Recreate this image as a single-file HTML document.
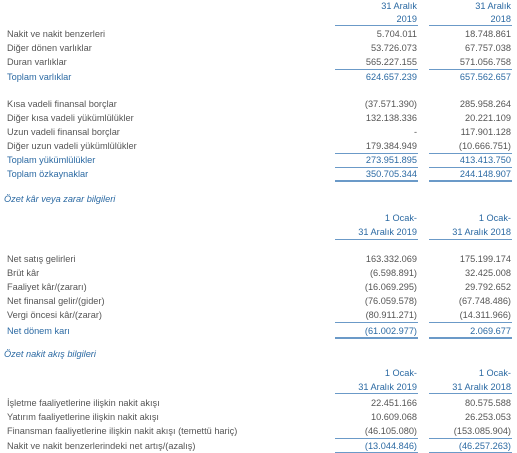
<!DOCTYPE html>
<html><head><meta charset="utf-8"><style>
body{margin:0;width:517px;height:453px;background:#fff;position:relative;overflow:hidden;font-family:"Liberation Sans","DejaVu Sans",sans-serif;font-size:9.2px;color:#555}
.r{position:absolute;left:0;width:517px;height:12px;line-height:12px}
.l{position:absolute;left:7px}
.a{position:absolute;right:100px;text-align:right}
.b{position:absolute;right:6px;text-align:right}
.bl{color:#2c6aa3}
.i{font-style:italic;color:#2c6aa3}
.u{position:absolute;height:1px;background:#6b9ac8}
.d{position:absolute;height:2px;background:#6b9ac8}
</style></head><body>
<div class="r bl" style="top:0px"><span class="a">31 Aralık</span><span class="b">31 Aralık</span></div>
<div class="r bl" style="top:13px"><span class="a">2019</span><span class="b">2018</span></div>
<div class="u" style="top:25px;left:335px;width:83px"></div><div class="u" style="top:25px;left:429px;width:83px"></div>
<div class="r" style="top:28px"><span class="l">Nakit ve nakit benzerleri</span><span class="a">5.704.011</span><span class="b">18.748.861</span></div>
<div class="r" style="top:42px"><span class="l">Diğer dönen varlıklar</span><span class="a">53.726.073</span><span class="b">67.757.038</span></div>
<div class="r" style="top:56px"><span class="l">Duran varlıklar</span><span class="a">565.227.155</span><span class="b">571.056.758</span></div>
<div class="u" style="top:69px;left:335px;width:83px"></div><div class="u" style="top:69px;left:429px;width:83px"></div>
<div class="r bl" style="top:71px"><span class="l">Toplam varlıklar</span><span class="a">624.657.239</span><span class="b">657.562.657</span></div>
<div class="r" style="top:98px"><span class="l">Kısa vadeli finansal borçlar</span><span class="a">(37.571.390)</span><span class="b">285.958.264</span></div>
<div class="r" style="top:112px"><span class="l">Diğer kısa vadeli yükümlülükler</span><span class="a">132.138.336</span><span class="b">20.221.109</span></div>
<div class="r" style="top:126px"><span class="l">Uzun vadeli finansal borçlar</span><span class="a">-</span><span class="b">117.901.128</span></div>
<div class="r" style="top:140px"><span class="l">Diğer uzun vadeli yükümlülükler</span><span class="a">179.384.949</span><span class="b">(10.666.751)</span></div>
<div class="u" style="top:153px;left:335px;width:83px"></div><div class="u" style="top:153px;left:429px;width:83px"></div>
<div class="r bl" style="top:154px"><span class="l">Toplam yükümlülükler</span><span class="a">273.951.895</span><span class="b">413.413.750</span></div>
<div class="u" style="top:167px;left:335px;width:83px"></div><div class="u" style="top:167px;left:429px;width:83px"></div>
<div class="r bl" style="top:168px"><span class="l">Toplam özkaynaklar</span><span class="a">350.705.344</span><span class="b">244.148.907</span></div>
<div class="d" style="top:180px;left:335px;width:83px"></div><div class="d" style="top:180px;left:429px;width:83px"></div>
<div class="r i" style="top:193px"><span class="l" style="left:4px">Özet kâr veya zarar bilgileri</span></div>
<div class="r bl" style="top:212px"><span class="a">1 Ocak-</span><span class="b">1 Ocak-</span></div>
<div class="r bl" style="top:226px"><span class="a">31 Aralık 2019</span><span class="b">31 Aralık 2018</span></div>
<div class="u" style="top:239px;left:335px;width:83px"></div><div class="u" style="top:239px;left:429px;width:83px"></div>
<div class="r" style="top:253px"><span class="l">Net satış gelirleri</span><span class="a">163.332.069</span><span class="b">175.199.174</span></div>
<div class="r" style="top:267px"><span class="l">Brüt kâr</span><span class="a">(6.598.891)</span><span class="b">32.425.008</span></div>
<div class="r" style="top:281px"><span class="l">Faaliyet kâr/(zararı)</span><span class="a">(16.069.295)</span><span class="b">29.792.652</span></div>
<div class="r" style="top:295px"><span class="l">Net finansal gelir/(gider)</span><span class="a">(76.059.578)</span><span class="b">(67.748.486)</span></div>
<div class="r" style="top:309px"><span class="l">Vergi öncesi kâr/(zarar)</span><span class="a">(80.911.271)</span><span class="b">(14.311.966)</span></div>
<div class="u" style="top:322px;left:335px;width:83px"></div><div class="u" style="top:322px;left:429px;width:83px"></div>
<div class="r bl" style="top:325px"><span class="l">Net dönem karı</span><span class="a">(61.002.977)</span><span class="b">2.069.677</span></div>
<div class="d" style="top:337px;left:335px;width:83px"></div><div class="d" style="top:337px;left:429px;width:83px"></div>
<div class="r i" style="top:348px"><span class="l" style="left:4px">Özet nakit akış bilgileri</span></div>
<div class="r bl" style="top:367px"><span class="a">1 Ocak-</span><span class="b">1 Ocak-</span></div>
<div class="r bl" style="top:381px"><span class="a">31 Aralık 2019</span><span class="b">31 Aralık 2018</span></div>
<div class="u" style="top:393px;left:335px;width:83px"></div><div class="u" style="top:393px;left:429px;width:83px"></div>
<div class="r" style="top:397px"><span class="l">İşletme faaliyetlerine ilişkin nakit akışı</span><span class="a">22.451.166</span><span class="b">80.575.588</span></div>
<div class="r" style="top:411px"><span class="l">Yatırım faaliyetlerine ilişkin nakit akışı</span><span class="a">10.609.068</span><span class="b">26.253.053</span></div>
<div class="r" style="top:425px"><span class="l">Finansman faaliyetlerine ilişkin nakit akışı (temettü hariç)</span><span class="a">(46.105.080)</span><span class="b">(153.085.904)</span></div>
<div class="u" style="top:438px;left:335px;width:83px"></div><div class="u" style="top:438px;left:429px;width:83px"></div>
<div class="r" style="top:440px"><span class="l">Nakit ve nakit benzerlerindeki net artış/(azalış)</span><span class="a bl">(13.044.846)</span><span class="b bl">(46.257.263)</span></div>
<div class="u" style="top:452px;left:335px;width:83px"></div><div class="u" style="top:452px;left:429px;width:83px"></div>
</body></html>
